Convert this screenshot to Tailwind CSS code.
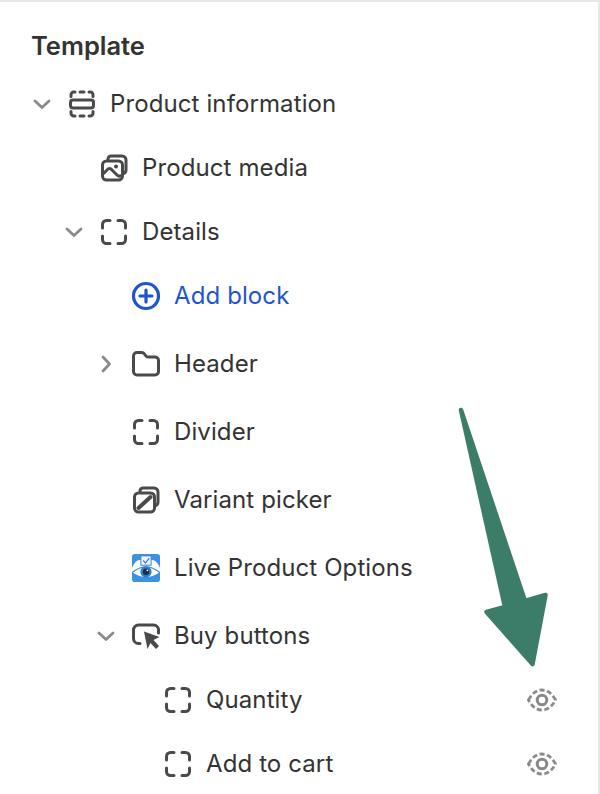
<!doctype html>
<html><head><meta charset="utf-8"><script src="https://cdn.jsdelivr.net/npm/@tailwindcss/browser@4"></script></head>
<body class="bg-white">
<div class="relative w-[600px] h-[794px] overflow-hidden bg-white border-t-2 border-r-2 border-[#e8e8e8] font-['Inter',sans-serif] text-[24px] tracking-[0.11px] text-[#333333]">
  <div class="h-[70px] pl-[31px] pt-[28px] font-semibold text-[25.5px] tracking-normal leading-[32px]">Template</div>

  <div class="flex items-center h-[64px] pl-[30px]">
    <div class="w-[38px] flex"><svg width="24" height="24" viewBox="0 0 24 24" fill="none" stroke="#8a8a8a" stroke-width="2.800" stroke-linecap="round" stroke-linejoin="round"><path d="M5 9l7 6.500L19 9"/></svg></div>
    <svg class="w-[28px] h-[28px] mr-[14px]" viewBox="0 0 28 28" fill="none" stroke="#4a4a4a" stroke-width="3" stroke-linecap="round"><path d="M3 6.500V4.800A2.800 2.800 0 0 1 5.800 2H7M12 2h4M21 2h1.200A2.800 2.800 0 0 1 25 4.800V6.500M3 21.500v1.700A2.800 2.800 0 0 0 5.800 26H7M12 26h4M21 26h1.200a2.800 2.800 0 0 0 2.800-2.800v-1.700"/><rect x="2.500" y="10" width="23" height="8" rx="2.500"/></svg>
    <span>Product information</span>
  </div>

  <div class="flex items-center h-[64px] pl-[62px]">
    <div class="w-[38px]"></div>
    <svg class="w-[28px] h-[28px] mr-[14px]" viewBox="0 0 28 28" fill="none" stroke="#4a4a4a" stroke-width="3" stroke-linecap="round" stroke-linejoin="round"><path d="M8 6V5a3 3 0 0 1 3-3h11a4 4 0 0 1 4 4v10a4 4 0 0 1-3.500 3.900"/><rect x="2.500" y="7" width="20" height="19" rx="4"/><path d="M3 20l5-5q1.500-1 3 0l6 6q2 2 4.500.500"/><circle cx="16" cy="12.500" r="2" fill="#4a4a4a" stroke="none"/></svg>
    <span>Product media</span>
  </div>

  <div class="flex items-center h-[64px] pl-[62px]">
    <div class="w-[38px] flex"><svg width="24" height="24" viewBox="0 0 24 24" fill="none" stroke="#8a8a8a" stroke-width="2.800" stroke-linecap="round" stroke-linejoin="round"><path d="M5 9l7 6.500L19 9"/></svg></div>
    <svg class="w-[28px] h-[28px] mr-[14px]" viewBox="0 0 28 28" fill="none" stroke="#4a4a4a" stroke-width="3" stroke-linecap="round"><path d="M10 2.500H6.500a4 4 0 0 0-4 4V10M18 2.500h3.500a4 4 0 0 1 4 4V10M2.500 18v3.500a4 4 0 0 0 4 4H10M25.500 18v3.500a4 4 0 0 1-4 4H18"/></svg>
    <span>Details</span>
  </div>

  <div class="flex items-center h-[64px] pl-[94px] text-[#1f55cc]">
    <div class="w-[38px]"></div>
    <svg class="w-[30px] h-[30px] mr-[13px] -ml-[1px]" viewBox="0 0 30 30" fill="none" stroke="#1f55cc" stroke-width="3.200" stroke-linecap="round"><circle cx="15" cy="15" r="12.500"/><path d="M15 9v12M9 15h12"/></svg>
    <span>Add block</span>
  </div>

  <div class="flex items-center h-[64px] mt-[4px] pl-[94px]">
    <div class="w-[38px] flex"><svg width="24" height="24" viewBox="0 0 24 24" fill="none" stroke="#8a8a8a" stroke-width="2.800" stroke-linecap="round" stroke-linejoin="round"><path d="M9 5l6.500 7L9 19"/></svg></div>
    <svg class="w-[28px] h-[28px] mr-[14px]" viewBox="0 0 28 28" fill="none" stroke="#4a4a4a" stroke-width="3" stroke-linejoin="round"><path d="M1.500 6a3.500 3.500 0 0 1 3.500-3.500h4.500q2 0 3 1.500l1 1.500q1 1.500 3 1.500H23a3.500 3.500 0 0 1 3.500 3.500v11A3.500 3.500 0 0 1 23 25H5a3.500 3.500 0 0 1-3.500-3.500z"/></svg>
    <span>Header</span>
  </div>

  <div class="flex items-center h-[64px] mt-[4px] pl-[94px]">
    <div class="w-[38px]"></div>
    <svg class="w-[28px] h-[28px] mr-[14px]" viewBox="0 0 28 28" fill="none" stroke="#4a4a4a" stroke-width="3" stroke-linecap="round"><path d="M10 2.500H6.500a4 4 0 0 0-4 4V10M18 2.500h3.500a4 4 0 0 1 4 4V10M2.500 18v3.500a4 4 0 0 0 4 4H10M25.500 18v3.500a4 4 0 0 1-4 4H18"/></svg>
    <span>Divider</span>
  </div>

  <div class="flex items-center h-[64px] mt-[4px] pl-[94px]">
    <div class="w-[38px]"></div>
    <svg class="w-[28px] h-[28px] mr-[14px]" viewBox="0 0 28 28" fill="none" stroke="#4a4a4a" stroke-width="3" stroke-linecap="round" stroke-linejoin="round"><path d="M8 6V5a3 3 0 0 1 3-3h11a4 4 0 0 1 4 4v10a4 4 0 0 1-3.500 3.900"/><rect x="2.500" y="7" width="20" height="19" rx="4"/><path d="M6.500 22L18.500 11" stroke-width="4"/></svg>
    <span>Variant picker</span>
  </div>

  <div class="flex items-center h-[64px] mt-[4px] pl-[94px]">
    <div class="w-[38px]"></div>
    <svg class="w-[28px] h-[28px] mr-[14px]" viewBox="0 0 30 30">
      <rect width="30" height="30" rx="3" fill="#3b93e0"/>
      <path d="M0 15Q4 5 10 6.500h10Q26 5 30 15v4Q15 7 0 19z" fill="#fff"/>
      <rect x="9.500" y="2" width="11" height="10" fill="#eaf4fc" stroke="#3b7cc4" stroke-width="1"/>
      <path d="M12 7l2.500 2.500L18.500 4.500" fill="none" stroke="#3b7cc4" stroke-width="1.300"/>
      <path d="M1 20Q15 9 29 20Q15 29 1 20z" fill="#fff"/>
      <circle cx="15" cy="19" r="6" fill="#2b7fce"/>
      <circle cx="15" cy="19" r="3.400" fill="#1c2f4a"/>
      <circle cx="16.500" cy="17.500" r="1" fill="#fff"/>
    </svg>
    <span>Live Product Options</span>
  </div>

  <div class="flex items-center h-[64px] mt-[4px] pl-[94px]">
    <div class="w-[38px] flex"><svg width="24" height="24" viewBox="0 0 24 24" fill="none" stroke="#8a8a8a" stroke-width="2.800" stroke-linecap="round" stroke-linejoin="round"><path d="M5 9l7 6.500L19 9"/></svg></div>
    <svg class="w-[28px] h-[28px] mr-[14px]" viewBox="0 0 28 28" fill="none"><path d="M8 21.500H6.500a5 5 0 0 1-5-5V8a5 5 0 0 1 5-5h15a5 5 0 0 1 5 5v3" stroke="#4a4a4a" stroke-width="3" stroke-linecap="round"/><path d="M12 9.500L27.500 15l-6 3 5.500 6-3 3-5.500-6-3 6z" fill="#4a4a4a"/></svg>
    <span>Buy buttons</span>
  </div>

  <div class="flex items-center h-[64px] pl-[126px]">
    <div class="w-[38px]"></div>
    <svg class="w-[28px] h-[28px] mr-[14px]" viewBox="0 0 28 28" fill="none" stroke="#4a4a4a" stroke-width="3" stroke-linecap="round"><path d="M10 2.500H6.500a4 4 0 0 0-4 4V10M18 2.500h3.500a4 4 0 0 1 4 4V10M2.500 18v3.500a4 4 0 0 0 4 4H10M25.500 18v3.500a4 4 0 0 1-4 4H18"/></svg>
    <span class="flex-1">Quantity</span>
    <svg class="w-[30px] h-[24px] mr-[41px]" viewBox="0 0 30 24" fill="none" stroke="#8a8a8a"><path d="M1.500 12C5 5.500 9.500 2 15 2s10 3.500 13.500 10C25 18.500 20.500 22 15 22S5 18.500 1.500 12z" stroke-width="2.800" stroke-dasharray="5 2.600"/><circle cx="15" cy="12" r="4.800" stroke-width="3"/></svg>
  </div>

  <div class="flex items-center h-[64px] pl-[126px]">
    <div class="w-[38px]"></div>
    <svg class="w-[28px] h-[28px] mr-[14px]" viewBox="0 0 28 28" fill="none" stroke="#4a4a4a" stroke-width="3" stroke-linecap="round"><path d="M10 2.500H6.500a4 4 0 0 0-4 4V10M18 2.500h3.500a4 4 0 0 1 4 4V10M2.500 18v3.500a4 4 0 0 0 4 4H10M25.500 18v3.500a4 4 0 0 1-4 4H18"/></svg>
    <span class="flex-1">Add to cart</span>
    <svg class="w-[30px] h-[24px] mr-[41px]" viewBox="0 0 30 24" fill="none" stroke="#8a8a8a"><path d="M1.500 12C5 5.500 9.500 2 15 2s10 3.500 13.500 10C25 18.500 20.500 22 15 22S5 18.500 1.500 12z" stroke-width="2.800" stroke-dasharray="5 2.600"/><circle cx="15" cy="12" r="4.800" stroke-width="3"/></svg>
  </div>

  <svg class="absolute left-0 -top-[2px]" width="600" height="794" viewBox="0 0 600 794"><path d="M461 410L505 607L486.500 612L532.500 664L545.500 595L525 601z" fill="#3b7d68" stroke="#3b7d68" stroke-width="4.500" stroke-linejoin="round"/></svg>
</div>
</body></html>
